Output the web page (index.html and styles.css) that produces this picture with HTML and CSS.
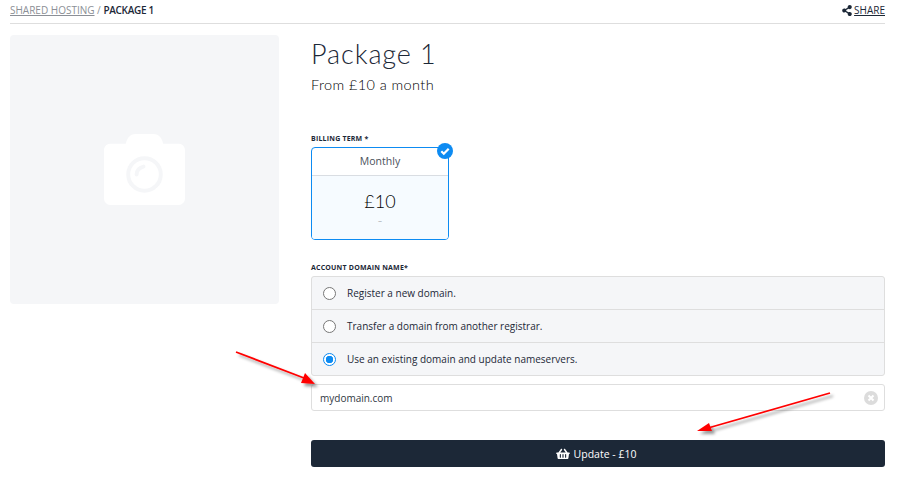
FILE: index.html
```html
<!DOCTYPE html>
<html lang="en">
  <head>
    <meta charset="UTF-8" />
    <title>Package 1</title>
    <link rel="stylesheet" href="styles.css">
  </head>
  <body>
    <div class="page">
      <div class="topbar">
        <div class="crumbs"><a href="#">SHARED HOSTING</a> / <strong>PACKAGE 1</strong></div>
        <a class="share" href="#">
          <svg viewBox="0 0 448 512" width="10" height="11"><path fill="#1c2837" d="M352 320c-22.600 0-43.400 7.800-59.800 20.900l-102.500-64.100a96.600 96.600 0 0 0 0-41.700l102.500-64.100C308.600 184.200 329.400 192 352 192c53 0 96-43 96-96S405 0 352 0s-96 43-96 96c0 7.200.8 14.100 2.300 20.800L155.800 180.900C139.400 167.800 118.600 160 96 160c-53 0-96 43-96 96s43 96 96 96c22.600 0 43.400-7.800 59.800-20.900l102.500 64.100A96.300 96.300 0 0 0 256 416c0 53 43 96 96 96s96-43 96-96-43-96-96-96z"/></svg>
          <span>SHARE</span>
        </a>
      </div>
      <div class="main">
        <div class="photo">
          <svg viewBox="0 0 82 72" width="81" height="71">
            <path fill="#fff" d="M6 10h16c1-5 4-10 10-10h18c6 0 9 5 10 10h16c3 0 6 3 6 6v50c0 3-3 6-6 6H6c-3 0-6-3-6-6V16c0-3 3-6 6-6z"/>
            <circle cx="41" cy="41" r="16.500" fill="none" stroke="#f5f6f8" stroke-width="4"/>
            <path d="M33 41c0-4 3-7 7-8" fill="none" stroke="#f5f6f8" stroke-width="4" stroke-linecap="round"/>
          </svg>
        </div>
        <div class="details">
          <h1>Package 1</h1>
          <p class="from">From £10 a month</p>

          <label class="field-label term-label">BILLING TERM *</label>
          <div class="term">
            <div class="term-name">Monthly</div>
            <div class="term-body">
              <div class="price">£10</div>
              <div class="dash">–</div>
            </div>
            <span class="tick">
              <svg viewBox="0 0 16 16" width="16" height="16">
                <circle cx="8" cy="8" r="8" fill="#0d8bf2"/>
                <path d="M4.300 8.300l2.500 2.500 4.900-5" fill="none" stroke="#fff" stroke-width="2.200"/>
              </svg>
            </span>
          </div>

          <label class="field-label domain-label">ACCOUNT DOMAIN NAME*</label>
          <div class="options">
            <div class="option"><span class="radio"></span>Register a new domain.</div>
            <div class="option"><span class="radio"></span>Transfer a domain from another registrar.</div>
            <div class="option"><span class="radio on"></span>Use an existing domain and update nameservers.</div>
          </div>
          <div class="domain-input">
            <span>mydomain.com</span>
            <svg viewBox="0 0 14 14" width="14" height="14">
              <circle cx="7" cy="7" r="7" fill="#dcdcdc"/>
              <path d="M4.500 4.500l5 5m0-5l-5 5" stroke="#fff" stroke-width="2"/>
            </svg>
          </div>
          <button class="update">
            <svg viewBox="0 0 576 512" width="14" height="12"><path fill="#fff" d="M576 216v16c0 13.300-10.700 24-24 24h-8l-26.100 182.800C515.600 454.600 502 466 486.100 466H89.900c-15.900 0-29.500-11.700-31.800-27.200L32 256h-8c-13.300 0-24-10.700-24-24v-16c0-13.300 10.700-24 24-24h67.300L198 45.400c10.400-14.300 30.400-17.500 44.700-7.100 14.300 10.400 17.500 30.400 7.100 44.700L170.400 192h235.200L326.200 83c-10.400-14.300-7.200-34.300 7.100-44.700 14.300-10.400 34.300-7.200 44.700 7.100L484.700 192H552c13.300 0 24 10.700 24 24zM312 392V280c0-13.300-10.700-24-24-24s-24 10.700-24 24v112c0 13.300 10.700 24 24 24s24-10.700 24-24zm112 0V280c0-13.300-10.700-24-24-24s-24 10.700-24 24v112c0 13.300 10.700 24 24 24s24-10.700 24-24zm-224 0V280c0-13.300-10.700-24-24-24s-24 10.700-24 24v112c0 13.300 10.700 24 24 24s24-10.700 24-24z"/></svg>
            Update - £10
          </button>
        </div>
      </div>
    </div>

    <!-- red arrows drawn over the page -->
    <svg class="arrows" viewBox="0 0 924 489" width="924" height="489">
      <defs>
        <filter id="soft" x="-20%" y="-50%" width="140%" height="200%">
          <feDropShadow dx="3" dy="3" stdDeviation="1.500" flood-color="#000" flood-opacity="0.4"/>
        </filter>
      </defs>
      <g filter="url(#soft)">
        <path d="M236 352L304 378" stroke="#f00" stroke-width="1.800"/>
        <path d="M315 384L301 383L305 373z" fill="#f00"/>
        <path d="M830 393L708 428" stroke="#f00" stroke-width="1.800"/>
        <path d="M697 431L709 423L712 431z" fill="#f00"/>
      </g>
    </svg>
  </body>
</html>
```

FILE: styles.css
```css
* {
  box-sizing: border-box;
}

body {
  margin: 0;
  background-color: #fff;
  color: #1c2837;
  font-family: "Open Sans", "Noto Sans", sans-serif;
  font-size: 12px;
}

.page {
  width: 885px;
  padding-left: 10px;
}

.topbar {
  display: flex;
  justify-content: space-between;
  align-items: center;
  height: 24px;
  padding-bottom: 3px;
  border-bottom: 1px solid #dedede;
  font-size: 10px;
}

.crumbs {
  color: #8b8f96;
}

.crumbs a {
  color: #8b8f96;
}

.crumbs strong {
  color: #1c2837;
  font-weight: 600;
  letter-spacing: -0.3px;
}

.share {
  display: flex;
  align-items: center;
  gap: 2px;
  color: #1c2837;
}

.main {
  display: flex;
  gap: 32px;
  padding-top: 11px;
}

.photo {
  display: flex;
  align-items: center;
  justify-content: center;
  flex: 0 0 269px;
  height: 269px;
  background-color: #f5f6f8;
  border-radius: 4px;
}

.details {
  flex: 1;
}

h1 {
  margin: 0;
  height: 38px;
  font-family: "Lato", sans-serif;
  font-size: 27px;
  font-weight: 300;
  line-height: 38px;
  letter-spacing: 0.9px;
}

.from {
  margin: 1px 0 0 0;
  color: #000;
  font-family: "Lato", sans-serif;
  font-size: 14.500px;
  font-weight: 300;
  line-height: 22px;
  letter-spacing: 0.4px;
}

.field-label {
  display: block;
  font-size: 7px;
  font-weight: 700;
  line-height: 10px;
  letter-spacing: 0.2px;
  color: #1c2837;
}

.term-label {
  margin-top: 38px;
  margin-bottom: 3px;
}

.term {
  position: relative;
  width: 138px;
  height: 93px;
  border: 1px solid #0d8bf2;
  border-radius: 4px;
  overflow: visible;
}

.term-name {
  height: 28px;
  font-size: 10.500px;
  font-weight: 500;
  line-height: 27px;
  text-align: center;
  color: #4a505b;
  border-bottom: 1px solid #d9dde2;
}

.term-body {
  height: 63px;
  background-color: #f6fbff;
  border-radius: 0 0 3px 3px;
  text-align: center;
  padding-top: 13px;
}

.price {
  color: #000;
  font-family: "Lato", sans-serif;
  font-size: 18px;
  font-weight: 300;
  line-height: 24px;
}

.dash {
  color: #9a9ea5;
  font-size: 8px;
  line-height: 14px;
}

.tick {
  position: absolute;
  top: -5px;
  right: -5px;
  width: 16px;
  height: 16px;
}

.domain-label {
  margin-top: 23px;
  margin-bottom: 3px;
}

.options {
  border: 1px solid #dedede;
  border-radius: 3px;
  background-color: #f5f6f8;
}

.option {
  display: flex;
  align-items: center;
  gap: 11px;
  height: 33px;
  padding-left: 11px;
  font-size: 10px;
  color: #1c2837;
  border-bottom: 1px solid #dedede;
}

.option:last-child {
  height: 32px;
  border-bottom: none;
}

.radio {
  width: 13px;
  height: 13px;
  background-color: #fff;
  border: 1px solid #777;
  border-radius: 50%;
}

.radio.on {
  border-color: #0d8bf2;
  background: radial-gradient(circle, #0d8bf2 0 3.500px, #fff 4px);
}

.domain-input {
  display: flex;
  justify-content: space-between;
  align-items: center;
  height: 27px;
  margin-top: 8px;
  padding: 0 6px 0 8px;
  border: 1px solid #dedede;
  border-radius: 3px;
  font-size: 10px;
  color: #2f3743;
}

.update {
  display: flex;
  justify-content: center;
  align-items: center;
  gap: 4px;
  width: 100%;
  height: 27px;
  margin-top: 29px;
  padding: 0 4px 0 0;
  background-color: #1c2837;
  color: #fff;
  border: none;
  border-radius: 3px;
  font-family: inherit;
  font-size: 10.500px;
  font-weight: 500;
}

.arrows {
  position: absolute;
  top: 0;
  left: 0;
  pointer-events: none;
}
```
